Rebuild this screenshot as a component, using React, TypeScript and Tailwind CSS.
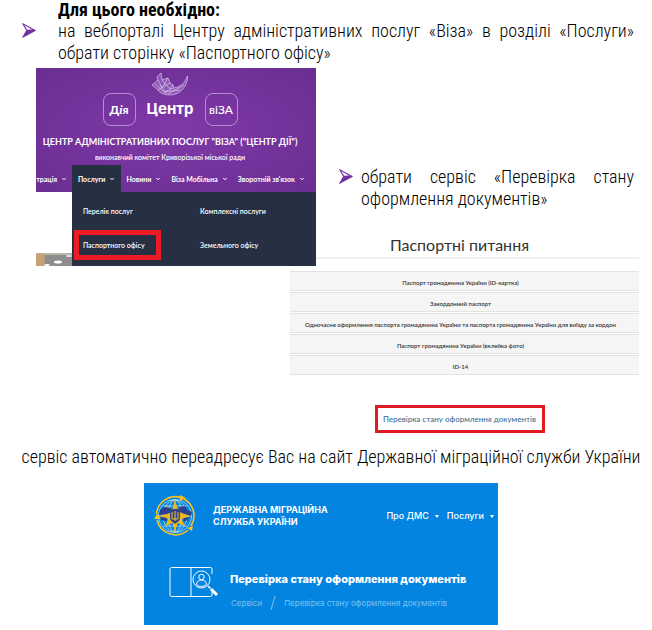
import React from 'react';
import { ChevronDown } from 'lucide-react';

const PASSPORT_SERVICES = [
    'Паспорт громадянина України (ID-картка)',
    'Закордонний паспорт',
    'Одночасне оформлення паспорта громадянина України та паспорта громадянина України для виїзду за кордон',
    'Паспорт громадянина України (вклейка фото)',
    'ID-14',
];

function ArrowBullet() {
    return (
        <svg viewBox="0 0 14 15" className="w-[14px] h-[15px] shrink-0" aria-hidden="true">
            <path d="M0.500 0.500L13.500 7.500L0.500 14.500L4.500 7.500Z" fill="#7030a0" stroke="#7030a0" strokeWidth="0.8" />
            <path d="M2.200 2.200L10 6.500L5.200 6.800Z" fill="#fff" />
        </svg>
    );
}

function Feather() {
    return (
        <svg viewBox="0 0 40 26" className="w-[40px] h-[26px]" fill="none" stroke="#d9c6ec" strokeWidth="0.7" aria-hidden="true">
            <path
                d="M2 14L8 9L7 6L11 2L12 9L18 7L20 12L23 14L24 17C30 16 35 12 37.500 5C38 14 31 24 20 24C14 24 10 22 8 19Z"
                fill="#b892d6"
                fillOpacity="0.4"
            />
            <path d="M8 9L12 17L18 7M12 9L20 18L23 14M5 13L14 21L24 17M8 19L20 12M10 14L17 23M14 21L30 19M18 23L34 14" />
        </svg>
    );
}

function MigrationLogo() {
    return (
        <svg viewBox="0 0 42 44" className="w-[42px] h-[44px] shrink-0" aria-hidden="true">
            <g fill="none" stroke="#b5dcf6" strokeWidth="0.8">
                <circle cx="21" cy="22" r="16.500" />
                <ellipse cx="21" cy="22" rx="7" ry="16" />
                <ellipse cx="21" cy="22" rx="12" ry="16" />
                <path d="M21 6v32M5 22h32M9 12h24M9 32h24" />
            </g>
            <path
                d="M21 5L23.500 15L30 12L27.500 19L37 22L27.500 25L31 32L23.500 29L21 39L18.500 29L11 32L14.500 25L5 22L14.500 19L12 12L18.500 15Z"
                fill="#f2b61c"
            />
            <path
                d="M6 16L10 13L17 14L18 18L13 20L5 21ZM25 13L31 12L33 16L38 18L37 22L31 20L25 18ZM6 23L13 24L12 27L7 26ZM30 24L36 23L32 27L29 27Z"
                fill="#2b3f8c"
            />
            <path d="M16 15h10v9c0 3-3 4-5 6c-2-2-5-3-5-6Z" fill="#33438a" />
            <path d="M18 18v7h6v-7M21 17v10" fill="none" stroke="#f8d02c" strokeWidth="0.9" />
            <g fill="none" stroke="#f6c324" strokeWidth="1.6">
                <path d="M2.500 20A19 19 0 0 1 27 3.500" />
                <path d="M30 5A19 19 0 0 1 37 32" />
                <path d="M34 36A19 19 0 0 1 3 26" />
            </g>
            <path d="M26 1L32 4L26 7ZM39 32L38 37L33 34ZM0 25L3 20L7 25Z" fill="#f6c324" />
        </svg>
    );
}

function DocumentSearchIcon() {
    return (
        <svg viewBox="0 0 50 32" className="w-[50px] h-[32px] shrink-0" fill="none" stroke="#fff" aria-hidden="true">
            <path d="M41.500 1.500H2.500a1.500 1.500 0 0 0-1.500 1.500v26a1.500 1.500 0 0 0 1.500 1.500h39a1.500 1.500 0 0 0 1.500-1.500v-3M43 3v5M41.500 1.500a1.500 1.500 0 0 1 1.500 1.500M22 1.500v29" />
            <circle cx="32.500" cy="13.500" r="8.500" />
            <circle cx="32.500" cy="11" r="2.700" />
            <path d="M27.500 18.500c0-6 10-6 10 0a7 7 0 0 1-10 0Z" />
            <path d="M39 20l2.500 2.500" strokeWidth="1.500" />
            <path d="M42 23l6 6" strokeWidth="3" />
        </svg>
    );
}

function NavItem({ label, active }: { label: string; active?: boolean }) {
    return (
        <a
            href="#"
            className={
                active
                    ? 'flex items-center gap-[4px] h-full px-[6px] bg-[#273043] whitespace-nowrap'
                    : 'flex items-center gap-[4px] h-full px-[5px] whitespace-nowrap'
            }
        >
            {label}
            <ChevronDown className="w-[6px] h-[6px]" strokeWidth={4} />
        </a>
    );
}

function CenterPortal() {
    return (
        <section className="flex flex-col h-[198px] overflow-hidden bg-white text-white font-[Lato,sans-serif]">
            <header className="flex flex-col h-[124px] shrink-0 bg-radial from-[#8039a8] to-[#6a2e92]">
                <div className="flex flex-col items-center pr-[12px]">
                    <div className="flex justify-center gap-[11px] h-[58px] pt-[3px]">
                        <div className="self-end flex items-center justify-center w-[33px] h-[33px] border border-[#b48fd0] rounded-[8px] text-[12px] font-bold">
                            <span>
                                Д<i className="font-['Liberation_Serif',serif]">і</i>я
                            </span>
                        </div>
                        <div className="flex flex-col items-center justify-between">
                            <Feather />
                            <span className="h-[25px] font-[Inter,sans-serif] text-[15px] leading-[16px] font-bold">Центр</span>
                        </div>
                        <div className="self-end flex items-center justify-center w-[33px] h-[33px] border border-[#b48fd0] rounded-[8px] text-[12px] font-medium">
                            віЗА
                        </div>
                    </div>
                    <h2 className="mt-[10px] text-[9px] leading-[12px] font-bold whitespace-nowrap">
                        ЦЕНТР АДМІНІСТРАТИВНИХ ПОСЛУГ "ВІЗА" ("ЦЕНТР ДІЇ")
                    </h2>
                    <p className="mt-[3px] text-[7px] leading-[12px] font-semibold">виконавчий комітет Криворізької міської ради</p>
                </div>
                <nav className="flex flex-1 mt-[2px] items-center text-[7px] font-bold">
                    <div className="flex justify-end w-[36px] h-full overflow-hidden">
                        <NavItem label="трація" />
                    </div>
                    <NavItem label="Послуги" active />
                    <NavItem label="Новини" />
                    <NavItem label="Віза Мобільна" />
                    <NavItem label="Зворотній зв'язок" />
                </nav>
            </header>
            <div className="flex flex-1">
                <div className="flex flex-col justify-end w-[36px]">
                    <svg viewBox="0 0 36 13" className="w-[36px] h-[13px]" aria-hidden="true">
                        <rect width="36" height="13" fill="#8f8d8b" />
                        <path d="M0 0h36v2H0z" fill="#b9b5ae" />
                        <path d="M0 1h9l-1 12H0z" fill="#c4a274" />
                        <ellipse cx="22" cy="9" rx="4" ry="1.500" fill="#fff" />
                        <ellipse cx="33" cy="3" rx="3" ry="1" fill="#e8e8e8" />
                        <ellipse cx="11" cy="12" rx="3" ry="1" fill="#fff" />
                    </svg>
                </div>
                <div className="grid grid-cols-[117px_1fr] grid-rows-[38px_1fr] flex-1 bg-[#273043] text-[7px] leading-[12px] font-semibold">
                    <a href="#" className="pl-[11px] pt-[13px]">Перелік послуг</a>
                    <a href="#" className="pl-[11px] pt-[13px]">Комплексні послуги</a>
                    <a
                        href="#"
                        className="flex items-center justify-self-start w-[87px] h-[30px] ml-[2px] border-[5px] border-[#ed1c24] pl-[4px] whitespace-nowrap"
                    >
                        Паспортного офісу
                    </a>
                    <a href="#" className="flex items-center h-[30px] pl-[11px]">Земельного офісу</a>
                </div>
            </div>
        </section>
    );
}

function PassportQuestions() {
    return (
        <section className="flex flex-col items-center font-[Lato,sans-serif] text-[#333]">
            <h2 className="w-full h-[25px] border-b-2 border-[#f0f0f0] pl-[26px] pr-[36px] text-center text-[16px] leading-[22px]">
                Паспортні питання
            </h2>
            <ul className="flex flex-col gap-[1px] w-full mt-[12px] text-[6px] font-semibold">
                {PASSPORT_SERVICES.map((name) => (
                    <li key={name} className="flex">
                        <button type="button" className="flex-1 h-[20px] bg-[#f5f5f5] border-y border-[#e2e2e2] pr-[8px] whitespace-nowrap">
                            {name}
                        </button>
                    </li>
                ))}
            </ul>
            <a
                href="#"
                className="flex items-center justify-center w-[170px] h-[28px] mt-[30px] mr-[10px] border-3 border-[#e01a22] text-[8px] font-medium text-[#3c6f94] whitespace-nowrap"
            >
                Перевірка стану оформлення документів
            </a>
        </section>
    );
}

function MigrationService() {
    return (
        <section className="w-[354px] h-[142px] pl-[10px] bg-[#0284e0] text-white font-[Inter,sans-serif]">
            <header className="flex items-center h-[66px]">
                <MigrationLogo />
                <p className="ml-[17px] text-[9px] leading-[12px] font-bold whitespace-nowrap">
                    ДЕРЖАВНА МІГРАЦІЙНА
                    <br />
                    СЛУЖБА УКРАЇНИ
                </p>
                <nav className="flex gap-[8px] ml-auto pr-[4px] text-[9px] leading-[12px] font-medium">
                    {['Про ДМС', 'Послуги'].map((label) => (
                        <a key={label} href="#" className="flex items-center gap-[6px] whitespace-nowrap">
                            {label}
                            <svg viewBox="0 0 4 3" className="w-[4px] h-[3px]" aria-hidden="true">
                                <path d="M0 0h4L2 3z" fill="#fff" />
                            </svg>
                        </a>
                    ))}
                </nav>
            </header>
            <div className="flex items-start pl-[15px] mt-[17px]">
                <DocumentSearchIcon />
                <div className="ml-[11px] mt-[5px] whitespace-nowrap">
                    <h2 className="text-[11px] leading-[16px] font-extrabold">Перевірка стану оформлення документів</h2>
                    <div className="flex items-center gap-[8px] mt-[9px] pl-[1px] text-[8px] leading-[14px] text-[#7cc2f3]">
                        <a href="#">Сервіси</a>
                        <svg viewBox="0 0 6 14" className="w-[6px] h-[14px]" aria-hidden="true">
                            <path d="M5 0L1 14" stroke="#7cc2f3" strokeWidth="1" />
                        </svg>
                        <span>Перевірка стану оформлення документів</span>
                    </div>
                </div>
            </div>
        </section>
    );
}

export default function App() {
    return (
        <main className="min-h-screen bg-white font-['Roboto_Condensed','Arial_Narrow',sans-serif] text-[18px] leading-[22px] text-black">
            <div className="pl-[22px] pr-[18px]">
                <h1 className="pl-[36px] text-[18px] leading-[20px] font-bold">Для цього необхідно:</h1>
                <div className="flex gap-[22px]">
                    <div className="pt-[3px]">
                        <ArrowBullet />
                    </div>
                    <p className="flex-1 text-justify font-light">
                        на вебпорталі Центру адміністративних послуг «Віза» в розділі «Послуги» обрати сторінку «Паспортного офісу»
                    </p>
                </div>
            </div>

            <div className="grid grid-cols-[254px_26px_1fr] grid-rows-[98px_68px_auto] pl-[36px] pr-[13px] mt-[4px]">
                <div className="relative z-10 col-start-1 col-span-2 row-start-1 row-span-3">
                    <CenterPortal />
                </div>
                <div className="col-start-3 row-start-2 flex gap-[8px] pl-[23px] pr-[5px]">
                    <div className="pt-[3px]">
                        <ArrowBullet />
                    </div>
                    <p className="flex-1 text-justify font-light">обрати сервіс «Перевірка стану оформлення документів»</p>
                </div>
                <div className="col-start-2 col-span-2 row-start-3">
                    <PassportQuestions />
                </div>
            </div>

            <p className="mt-[13px] pl-[20px] pr-[10px] text-center font-light">
                сервіс автоматично переадресує Вас на сайт Державної міграційної служби України
            </p>
            <div className="flex pl-[144px] mt-[15px]">
                <MigrationService />
            </div>
        </main>
    );
}
